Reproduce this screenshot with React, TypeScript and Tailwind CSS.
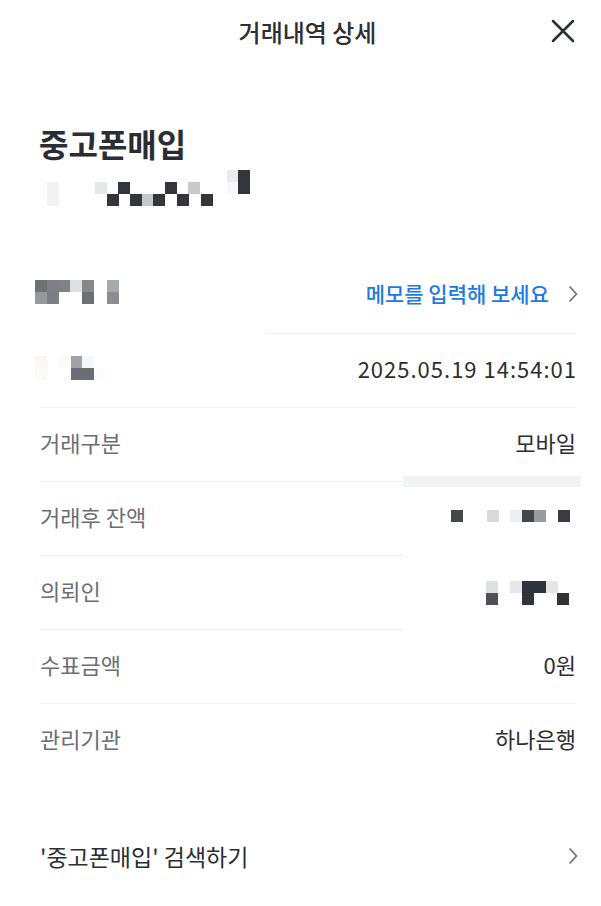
type Cell = [number, number, string, number?];

const DARK = '#33363b';

function Mosaic({ w, h, cells }: { w: number; h: number; cells: Cell[] }) {
  return (
    <svg width={w} height={h} viewBox={`0 0 ${w} ${h}`} className="block shrink-0">
      {cells.map(([x, y, c, cw], i) => (
        <rect key={i} x={x} y={y} width={cw ?? 12} height={12} fill={c} />
      ))}
    </svg>
  );
}

function Chevron({ className = '' }: { className?: string }) {
  return (
    <svg width="10" height="18" viewBox="0 0 10 18" className={className} fill="none">
      <path d="M2 2l6.5 7L2 16" stroke="#6b6e74" strokeWidth="1.7" strokeLinecap="round" strokeLinejoin="round" />
    </svg>
  );
}

function Row({ label, children }: { label: React.ReactNode; children: React.ReactNode }) {
  return (
    <div className="h-[73px] pb-[5px] flex items-center justify-between">
      <div className="text-[22px] text-[#6b6e74]">{label}</div>
      <div className="text-[22px] text-[#2b2e33]">{children}</div>
    </div>
  );
}

const nameMosaic: Cell[] = [
  [182, 0, '#ebebeb'], [193, 0, DARK],
  [2, 12, '#f3f3f3'], [50, 12, '#e6e7e8'], [73, 12, DARK], [120, 12, DARK], [143, 12, '#c8cacc'], [182, 12, '#f5f7f9'], [193, 12, DARK],
  [2, 24, '#f3f3f3'], [62, 24, DARK], [85, 24, DARK], [97, 24, '#c5c8cc'], [108, 24, DARK], [132, 24, DARK], [156, 24, DARK],
];

const memoMosaic: Cell[] = [
  [0, 0, '#6f7073'], [12, 0, '#7d8089'], [23, 0, '#808184'], [35, 0, '#dde0e2'], [47, 0, '#858789'], [72, 0, '#a6a9ad'],
  [0, 12, '#97989b'], [12, 12, '#7c7f86'], [47, 12, '#6c6f74'], [72, 12, '#8a8d91'],
];

const dateMosaic: Cell[] = [
  [0, 0, '#fbf8f4'], [24, 0, '#fdfbf8'], [36, 0, '#a0a3a6'], [47, 0, '#f5f8fa'],
  [0, 12, '#fcfaf7'], [36, 12, '#6b6f75', 23], [59, 12, '#fdfcf9'],
];

const balanceMosaic: Cell[] = [
  [0, 0, '#45474b'], [36, 0, '#d9dadb'], [59, 0, '#eceef0'], [71, 0, '#434549'], [83, 0, '#9a9b9d'], [107, 0, '#393c42'],
];

const clientMosaic: Cell[] = [
  [0, 0, '#dfe0e2'], [24, 0, '#e6e7e9'], [36, 0, '#2f3340', 24], [60, 0, '#e3e5e7'],
  [0, 12, '#4e5155'], [36, 12, '#303338'], [71, 12, '#303338'],
];

export default function App() {
  return (
    <div
      className="w-[601px] h-[906px] bg-white overflow-hidden"
      style={{ fontFamily: '"Noto Sans CJK KR", "Noto Sans", sans-serif' }}
    >
      {/* Header */}
      <div className="h-[64px] flex items-center justify-center relative pl-[14px]">
        <h1 className="text-[24px] font-medium text-[#2b2e33]">거래내역 상세</h1>
        <button className="absolute right-[24px] top-[17px] w-[28px] h-[28px] flex items-center justify-center">
          <svg width="26" height="26" viewBox="0 0 26 26" fill="none">
            <path d="M3 3l20 20M23 3L3 23" stroke="#2b2e33" strokeWidth="2.5" strokeLinecap="round" />
          </svg>
        </button>
      </div>

      <div className="pl-[40px] pr-[25px]">
        {/* Title */}
        <div className="pt-[58px]">
          <div className="text-[32px] leading-[42px] font-bold text-[#2a2d33] -ml-[1px]">중고폰매입</div>
          <div className="mt-[6px] ml-[5px]">
            <Mosaic w={206} h={36} cells={nameMosaic} />
          </div>
        </div>

        {/* Details */}
        <div className="mt-[54px]">
          <div className="h-[73px] pb-[5px] flex items-center justify-between">
            <div className="-ml-[5px] -translate-y-[2px]">
              <Mosaic w={84} h={24} cells={memoMosaic} />
            </div>
            <div className="flex items-center gap-[19px]">
              <span className="text-[21px] font-medium text-[#1d7ae3]">메모를 입력해 보세요</span>
              <Chevron className="-mr-[2px]" />
            </div>
          </div>
          <div className="h-px bg-[#eef0f2] ml-[228px]" />

          <div className="h-[73px] pb-[5px] flex items-center justify-between">
            <div className="-ml-[5px]">
              <Mosaic w={72} h={24} cells={dateMosaic} />
            </div>
            <div className="text-[22px] tracking-[1px] -mr-[1px] text-[#2b2e33]">2025.05.19 14:54:01</div>
          </div>
          <div className="h-px bg-[#eef0f2]" />

          <Row label="거래구분">모바일</Row>
          <div className="h-px flex items-center">
            <div className="w-[363px] h-px bg-[#eef0f2]" />
            <div className="flex-1 h-[11px] bg-[#f2f3f5] -mr-[5px]" />
          </div>

          <Row label="거래후 잔액">
            <div className="mr-[6px]">
              <Mosaic w={119} h={12} cells={balanceMosaic} />
            </div>
          </Row>
          <div className="h-px w-[363px] bg-[#eef0f2]" />

          <Row label="의뢰인">
            <div className="mr-[7px] translate-y-[3px]">
              <Mosaic w={83} h={24} cells={clientMosaic} />
            </div>
          </Row>
          <div className="h-px w-[363px] bg-[#eef0f2]" />

          <Row label="수표금액">0원</Row>
          <div className="h-px bg-[#eef0f2]" />

          <Row label="관리기관">하나은행</Row>
        </div>

        {/* Search */}
        <div className="mt-[42px] h-[74px] flex items-center justify-between">
          <span className="text-[23px] text-[#2b2e33]">'중고폰매입' 검색하기</span>
          <Chevron className="-mr-[2px]" />
        </div>
      </div>
    </div>
  );
}
